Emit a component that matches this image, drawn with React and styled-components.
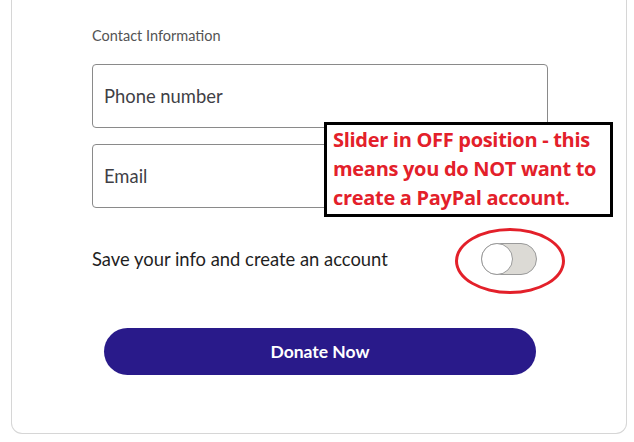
import React, { useState } from 'react';
import styled, { createGlobalStyle } from 'styled-components';

const GlobalStyle = createGlobalStyle`
    html, body {
        margin: 0;
        padding: 0;
        background: #ffffff;
    }
    body {
        font-family: Lato, "Noto Sans", sans-serif;
    }
`;

const Page = styled.div`
    position: relative;
    width: 634px;
    height: 442px;
    overflow: hidden;
    background: #fff;
`;

const Card = styled.section`
    margin-left: 11px;
    width: 616px;
    height: 434px;
    box-sizing: border-box;
    border: 1px solid #d6d6d6;
    border-top: none;
    border-radius: 0 0 11px 11px;
    padding: 27px 78px 0 80px;
    display: flex;
    flex-direction: column;
`;

const Label = styled.p`
    margin: 0 0 19px 0;
    font-size: 14.5px;
    color: #545454;
    line-height: 18px;
`;

const Field = styled.div`
    height: 64px;
    box-sizing: border-box;
    border: 1px solid #8a8a8a;
    border-radius: 4px;
    display: flex;
    align-items: center;
    padding: 0 11px;
    font-size: 18.4px;
    color: #3f3f46;
    margin-bottom: ${(p) => p.$gap || 0}px;
`;

const ToggleRow = styled.div`
    display: flex;
    align-items: center;
    justify-content: space-between;
    margin-top: 35px;
    padding-right: 11px;
    height: 32px;
`;

const ToggleLabel = styled.span`
    font-size: 18.4px;
    color: #1f1f1f;
`;

const Switch = styled.button`
    width: 56px;
    height: 32px;
    padding: 0;
    border: 1px solid #9a9a9a;
    border-radius: 16px;
    background: #dcdad5;
    position: relative;
    cursor: pointer;

    span {
        position: absolute;
        top: -1px;
        left: ${(p) => (p.$on ? '23px' : '-1px')};
        width: 32px;
        height: 32px;
        box-sizing: border-box;
        border-radius: 50%;
        background: #fff;
        border: 1px solid #9a9a9a;
    }
`;

const DonateButton = styled.button`
    margin: 53px auto 0 auto;
    width: 432px;
    height: 47px;
    border: none;
    border-radius: 24px;
    background: #291a8a;
    color: #fff;
    font-family: Lato, "Noto Sans", sans-serif;
    font-weight: 700;
    font-size: 17.5px;
`;

const Note = styled.div`
    position: absolute;
    left: 324px;
    top: 122px;
    width: 289px;
    height: 95px;
    box-sizing: border-box;
    border: 3px solid #000;
    background: #fff;
    padding: 0 0 0 6px;
    color: #e3202a;
    font-family: "Open Sans", "Noto Sans", sans-serif;
    font-weight: 700;
    font-size: 20px;
    line-height: 29px;
    letter-spacing: -0.3px;
    white-space: nowrap;
`;

const Circle = styled.div`
    position: absolute;
    left: 455px;
    top: 228px;
    width: 110px;
    height: 66px;
    box-sizing: border-box;
    border: 3px solid #e3202a;
    border-radius: 50%;
`;

export default function App() {
    const [on, setOn] = useState(false);

    return (
        <Page>
            <GlobalStyle />
            <Card>
                <Label>Contact Information</Label>
                <Field $gap={16}>Phone number</Field>
                <Field>Email</Field>
                <ToggleRow>
                    <ToggleLabel>Save your info and create an account</ToggleLabel>
                    <Switch $on={on} onClick={() => setOn(!on)} aria-label="Save your info">
                        <span />
                    </Switch>
                </ToggleRow>
                <DonateButton>Donate Now</DonateButton>
            </Card>

            <Note>
                Slider in OFF position - this<br />
                means you do NOT want to<br />
                create a PayPal account.
            </Note>
            <Circle />
        </Page>
    );
}
